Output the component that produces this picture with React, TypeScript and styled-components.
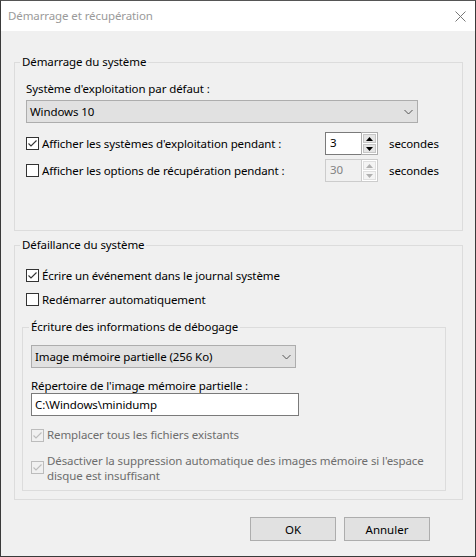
import React from 'react';
import styled, { createGlobalStyle } from 'styled-components';

const GlobalStyle = createGlobalStyle`
  html, body {
    margin: 0;
    padding: 0;
    background: #f0f0f0;
  }
  body {
    font-family: 'Noto Sans', 'DejaVu Sans', sans-serif;
    font-size: 11.5px;
    letter-spacing: -0.1px;
    color: #000;
  }
`;

const Window = styled.div`
  box-sizing: border-box;
  width: 476px;
  height: 557px;
  border: 1px solid #3a3a3a;
  border-top-color: #555;
  background: #f0f0f0;
  display: flex;
  flex-direction: column;
`;

const TitleBar = styled.div`
  height: 30px;
  background: #fff;
  display: flex;
  align-items: center;
  justify-content: space-between;
  padding: 0 9px 0 7px;
  color: #9a9a9a;
  line-height: 16px;
`;

const Body = styled.div`
  flex: 1;
  display: flex;
  flex-direction: column;
  padding: 23px 12px 0 13px;
`;

const Group = styled.fieldset<{ $pad: string; $height: number; $top?: number }>`
  box-sizing: border-box;
  margin: ${({ $top }) => $top ?? 0}px 0 0;
  min-width: 0;
  border: 1px solid #dcdcdc;
  padding: ${({ $pad }) => $pad};
  height: ${({ $height }) => $height}px;
  display: flex;
  flex-direction: column;
`;

const Legend = styled.legend<{ $shift: number }>`
  padding: 0 2px;
  margin-left: ${({ $shift }) => $shift}px;
  line-height: 16px;
`;

const Label = styled.div<{ $top?: number }>`
  line-height: 16px;
  margin-top: ${({ $top }) => $top ?? 0}px;
`;

const Combo = styled.div<{ $width: number; $top: number }>`
  box-sizing: border-box;
  width: ${({ $width }) => $width}px;
  height: 23px;
  margin-top: ${({ $top }) => $top}px;
  background: #e1e1e1;
  border: 1px solid #adadad;
  display: flex;
  align-items: center;
  justify-content: space-between;
  padding: 0 4px 0 3px;
`;

const TextBox = styled.div<{ $width: number; $top: number }>`
  box-sizing: border-box;
  width: ${({ $width }) => $width}px;
  height: 23px;
  margin-top: ${({ $top }) => $top}px;
  background: #fff;
  border: 1px solid #7a7a7a;
  display: flex;
  align-items: center;
  padding: 0 3px;
`;

const SpinRow = styled.div<{ $top: number }>`
  display: flex;
  align-items: center;
  margin-top: ${({ $top }) => $top}px;
  height: 23px;
`;

const CheckRow = styled.label<{
  $top: number;
  $width?: number;
  $indent?: number;
  $disabled?: boolean;
  $lineHeight?: number;
  $boxTop?: number;
}>`
  display: flex;
  align-items: flex-start;
  gap: 3px;
  margin-top: ${({ $top }) => $top}px;
  margin-left: ${({ $indent }) => $indent ?? 0}px;
  width: ${({ $width }) => ($width ? `${$width}px` : 'auto')};
  line-height: ${({ $lineHeight }) => $lineHeight ?? 16}px;
  color: ${({ $disabled }) => ($disabled ? '#6d6d6d' : '#000')};

  & > span:first-child {
    margin-top: ${({ $boxTop }) => $boxTop ?? 1}px;
  }
`;

const Box = styled.span<{ $disabled?: boolean }>`
  box-sizing: border-box;
  flex: none;
  width: 13px;
  height: 13px;
  border: 1px solid ${({ $disabled }) => ($disabled ? '#bcbcbc' : '#333')};
  background: ${({ $disabled }) => ($disabled ? '#f0f0f0' : '#fff')};
  display: flex;
  align-items: center;
  justify-content: center;
`;

const NoWrap = styled.span`
  white-space: nowrap;
`;

const Spin = styled.div`
  display: flex;
  height: 23px;
  margin-right: 11px;
`;

const SpinField = styled.div<{ $disabled?: boolean }>`
  box-sizing: border-box;
  width: 36px;
  height: 23px;
  border: 1px solid ${({ $disabled }) => ($disabled ? '#cccccc' : '#7a7a7a')};
  border-right: none;
  background: ${({ $disabled }) => ($disabled ? '#f0f0f0' : '#fff')};
  color: ${({ $disabled }) => ($disabled ? '#838383' : '#000')};
  padding: 2px 4px 0;
  line-height: 16px;
`;

const SpinButtons = styled.div<{ $disabled?: boolean }>`
  box-sizing: border-box;
  width: 17px;
  height: 23px;
  border: 1px solid ${({ $disabled }) => ($disabled ? '#cccccc' : '#adadad')};
  display: flex;
  flex-direction: column;
  gap: 1px;
  padding: 1px;
  background: #fff;
`;

const SpinHalf = styled.div<{ $disabled?: boolean }>`
  flex: 1;
  background: ${({ $disabled }) => ($disabled ? '#f4f4f4' : '#e5e5e5')};
  border: 1px solid ${({ $disabled }) => ($disabled ? '#e0e0e0' : '#c6c6c6')};
  display: flex;
  align-items: center;
  justify-content: center;
`;

const Footer = styled.div`
  display: flex;
  justify-content: flex-end;
  gap: 8px;
  margin-top: 17px;
  padding-right: 33px;
`;

const Button = styled.button`
  box-sizing: border-box;
  width: 86px;
  height: 24px;
  background: #e1e1e1;
  border: 1px solid #adadad;
  font: inherit;
  color: #000;
  padding: 0;
`;

const Chevron = () => (
  <svg width="9" height="6" viewBox="0 0 9 6">
    <path d="M0.5 1 L4.5 5 L8.5 1" fill="none" stroke="#555" strokeWidth="1" />
  </svg>
);

const CloseIcon = () => (
  <svg width="11" height="11" viewBox="0 0 11 11">
    <path d="M0.5 0.5 L10.5 10.5 M10.5 0.5 L0.5 10.5" stroke="#777" strokeWidth="1" />
  </svg>
);

const Arrow = ({ up, disabled }: { up: boolean; disabled?: boolean }) => (
  <svg width="7" height="4" viewBox="0 0 7 4">
    <path
      d={up ? 'M0 4 L3.5 0 L7 4 Z' : 'M0 0 L3.5 4 L7 0 Z'}
      fill={disabled ? '#b0b0b0' : '#000'}
    />
  </svg>
);

const CheckBox = ({ checked, disabled }: { checked?: boolean; disabled?: boolean }) => (
  <Box $disabled={disabled}>
    {checked && (
      <svg width="11" height="11" viewBox="0 0 11 11">
        <path
          d="M1.5 5.5 L4 8 L9.5 2.5"
          fill="none"
          stroke={disabled ? '#bcbcbc' : '#333'}
          strokeWidth="1.1"
        />
      </svg>
    )}
  </Box>
);

const SpinBox = ({ value, disabled }: { value: string; disabled?: boolean }) => (
  <Spin>
    <SpinField $disabled={disabled}>{value}</SpinField>
    <SpinButtons $disabled={disabled}>
      <SpinHalf $disabled={disabled}>
        <Arrow up disabled={disabled} />
      </SpinHalf>
      <SpinHalf $disabled={disabled}>
        <Arrow up={false} disabled={disabled} />
      </SpinHalf>
    </SpinButtons>
  </Spin>
);

const App = () => {
  return (
    <>
      <GlobalStyle />
      <Window>
        <TitleBar>
          <span>Démarrage et récupération</span>
          <CloseIcon />
        </TitleBar>
        <Body>
          <Group $pad="0 11px" $height={177}>
            <Legend $shift={-6}>Démarrage du système</Legend>
            <Label $top={11}>Système d&apos;exploitation par défaut :</Label>
            <Combo $width={392} $top={3}>
              <span>Windows 10</span>
              <Chevron />
            </Combo>
            <SpinRow $top={9}>
              <CheckRow $top={0} $width={299}>
                <CheckBox checked />
                <span>Afficher les systèmes d&apos;exploitation pendant :</span>
              </CheckRow>
              <SpinBox value="3" />
              <span>secondes</span>
            </SpinRow>
            <SpinRow $top={4}>
              <CheckRow $top={0} $width={299}>
                <CheckBox />
                <span>Afficher les options de récupération pendant :</span>
              </CheckRow>
              <SpinBox value="30" disabled />
              <span>secondes</span>
            </SpinRow>
          </Group>

          <Group $pad="0 16px 0 7px" $height={263} $top={6}>
            <Legend $shift={-2}>Défaillance du système</Legend>
            <CheckRow $top={15} $indent={4}>
              <CheckBox checked />
              <span>Écrire un événement dans le journal système</span>
            </CheckRow>
            <CheckRow $top={8} $indent={4}>
              <CheckBox />
              <span>Redémarrer automatiquement</span>
            </CheckRow>
            <Group $pad="0 8px" $height={172} $top={11}>
              <Legend $shift={-2}>Écriture des informations de débogage</Legend>
              <Combo $width={265} $top={10}>
                <span>Image mémoire partielle (256 Ko)</span>
                <Chevron />
              </Combo>
              <Label $top={10}>Répertoire de l&apos;image mémoire partielle :</Label>
              <TextBox $width={268} $top={-1}>
                C:\Windows\minidump
              </TextBox>
              <CheckRow $top={11} $disabled $boxTop={2}>
                <CheckBox checked disabled />
                <span>Remplacer tous les fichiers existants</span>
              </CheckRow>
              <CheckRow $top={10} $disabled $lineHeight={15} $boxTop={8}>
                <CheckBox checked disabled />
                <span>
                  <NoWrap>Désactiver la suppression automatique des images mémoire si l&apos;espace</NoWrap>
                  <br />
                  disque est insuffisant
                </span>
              </CheckRow>
            </Group>
          </Group>

          <Footer>
            <Button>OK</Button>
            <Button>Annuler</Button>
          </Footer>
        </Body>
      </Window>
    </>
  );
};

export default App;
